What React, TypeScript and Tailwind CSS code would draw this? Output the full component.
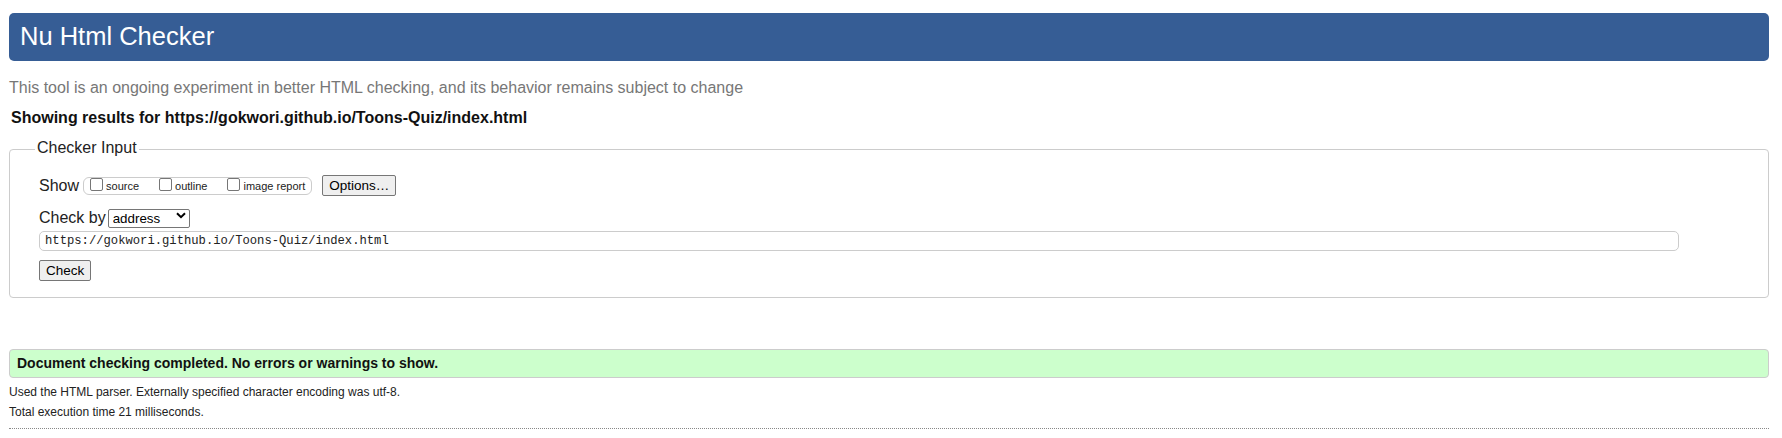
import React from "react";

function Check({ label, first }: { label: string; first?: boolean }) {
  return (
    <label className={`flex items-start ${first ? "ml-[6px]" : "ml-[20px]"}`}>
      <input
        type="checkbox"
        className="appearance-none w-[13px] h-[13px] border border-[#767676] rounded-[2px] bg-white m-0 shrink-0"
      />
      <span className="ml-[3px] mt-[2px] text-[11px] leading-[13px] text-[#222]">{label}</span>
    </label>
  );
}

export default function App() {
  return (
    <div className="min-h-[438px] bg-white pl-[9px] pr-[13px] pt-[13px] font-['Liberation_Sans',Arial,sans-serif] text-[#222]">
      <header className="h-[48px] rounded-[5px] bg-[#365d95] pl-[11px] pb-[3px] flex items-center">
        <h1 className="text-[25.5px] leading-[30px] text-white font-normal">Nu Html Checker</h1>
      </header>

      <p className="mt-[17px] text-[16px] leading-[19px] text-[#777]">
        This tool is an ongoing experiment in better HTML checking, and its behavior remains subject to change
      </p>
      <p className="mt-[11px] ml-[2px] text-[16px] leading-[19px] font-bold text-[#111]">
        Showing results for https://gokwori.github.io/Toons-Quiz/index.html
      </p>

      <fieldset className="mt-[11px] border border-[#cccccc] rounded-[4px] pl-[29px] pt-[14px] pb-[16px]">
        <legend className="ml-[-4px] px-[2px] pb-[4px] text-[16px] leading-[19px] text-[#222]">Checker Input</legend>

        <div className="flex items-center h-[21px]">
          <span className="text-[16px] leading-[19px]">Show</span>
          <div className="ml-[4px] flex items-start h-[18px] border border-[#cccccc] rounded-[6px] pr-[6px]">
            <Check label="source" first />
            <Check label="outline" />
            <Check label="image report" />
          </div>
          <button className="ml-[10px] h-[21px] px-[6px] border border-[#767676] rounded-[2px] bg-[#efefef] text-[13.5px] leading-[15px] text-black">
            Options…
          </button>
        </div>

        <div className="mt-[11px] flex items-center h-[21px]">
          <span className="text-[16px] leading-[19px]">Check by</span>
          <div className="relative ml-[2px]">
            <select className="appearance-none w-[82px] h-[19px] pl-[4px] border border-[#767676] rounded-[2px] bg-white text-[13.33px] leading-[15px] text-black">
              <option>address</option>
            </select>
            <svg
              className="pointer-events-none absolute right-[4px] top-[6px]"
              width="10"
              height="7"
              viewBox="0 0 10 7"
            >
              <path d="M1 1.2 L5 5.2 L9 1.2" fill="none" stroke="#000" strokeWidth="2" />
            </svg>
          </div>
        </div>

        <input
          type="text"
          readOnly
          value="https://gokwori.github.io/Toons-Quiz/index.html"
          className="mt-[3px] block w-[1640px] h-[20px] pl-[5px] border border-[#cccccc] rounded-[5px] bg-white font-['Liberation_Mono',monospace] text-[12.2px] text-[#222]"
        />

        <button className="mt-[9px] block h-[21px] px-[6px] border border-[#767676] rounded-[2px] bg-[#efefef] text-[13.5px] leading-[15px] text-black">
          Check
        </button>
      </fieldset>

      <div className="mt-[51px] h-[29px] border border-[#cccccc] rounded-[4px] bg-[#ccffcc] flex items-center pl-[7px]">
        <p className="text-[14px] leading-[17px] font-bold text-[#111]">
          Document checking completed. No errors or warnings to show.
        </p>
      </div>

      <p className="mt-[4px] text-[12px] leading-[20px] text-[#222]">
        Used the HTML parser. Externally specified character encoding was utf-8.
      </p>
      <p className="text-[12px] leading-[20px] text-[#222]">Total execution time 21 milliseconds.</p>
      <div className="mt-[6px] border-t border-dotted border-[#888]" />
    </div>
  );
}
